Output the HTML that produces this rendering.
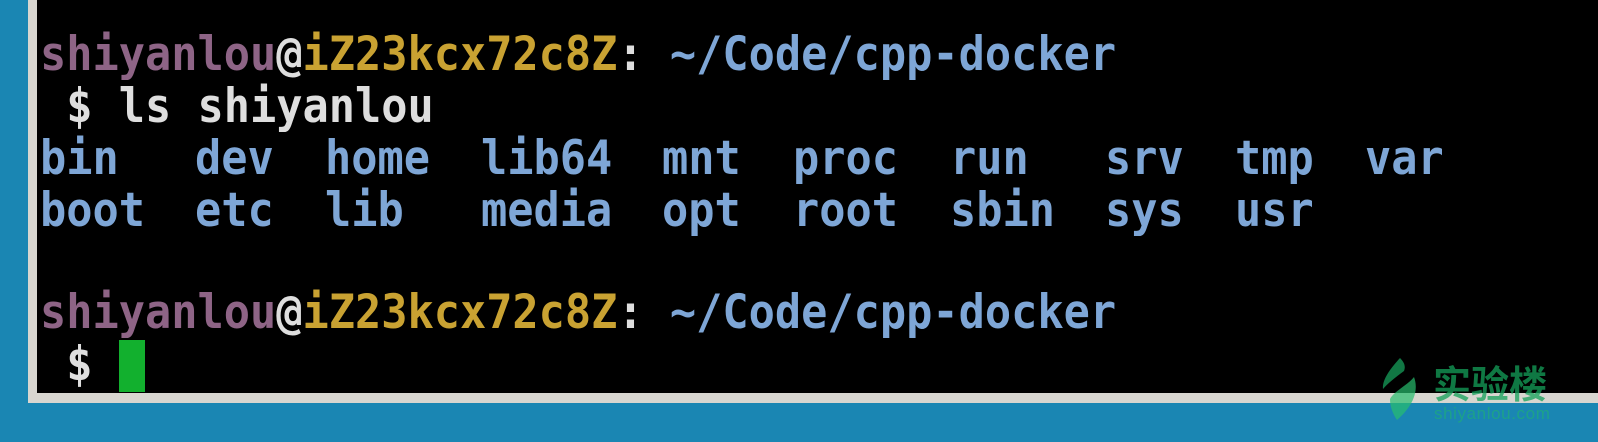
<!DOCTYPE html>
<html><head><meta charset="utf-8"><style>
html,body{margin:0;padding:0;width:1598px;height:442px;overflow:hidden;background:#1a86b3;}
.frame{position:absolute;left:28px;top:-10px;width:1600px;height:413px;background:#d8d6d0;}
.term{position:absolute;left:37px;top:0;width:1561px;height:393px;background:#000;}
.t{position:absolute;left:40px;font-family:"DejaVu Sans Mono","Liberation Mono",monospace;font-size:43.6px;font-weight:bold;white-space:pre;line-height:52px;transform:scaleY(1.08);transform-origin:0 0;}
.u{color:#8e6486}.h{color:#c9a232}.p{color:#7ea6d6}.w{color:#dedede}.b{color:#7ea6d6}
.cur{position:absolute;left:119px;top:340px;width:26px;height:52px;background:#12b02e;}
.logo{position:absolute;left:1433px;top:358px;font-family:"Noto Sans CJK SC",sans-serif;font-weight:bold;font-size:38px;color:rgba(20,160,90,0.75);line-height:48px;}
.dom{position:absolute;left:1434px;top:404px;font-family:"Liberation Sans",sans-serif;font-size:17px;color:rgba(30,180,110,0.6);letter-spacing:0.6px;}
</style></head><body>
<div class="frame"></div>
<div class="term"></div>
<div class="t" style="top:27px"><span class="u">shiyanlou</span><span class="w">@</span><span class="h">iZ23kcx72c8Z</span><span class="w">:</span><span class="p"> ~/Code/cpp-docker</span></div>
<div class="t w" style="top:79px"> $ ls shiyanlou</div>
<div class="t b" style="top:131px;left:40px">bin</div>
<div class="t b" style="top:131px;left:195px">dev</div>
<div class="t b" style="top:131px;left:325px">home</div>
<div class="t b" style="top:131px;left:481px">lib64</div>
<div class="t b" style="top:131px;left:662px">mnt</div>
<div class="t b" style="top:131px;left:793px">proc</div>
<div class="t b" style="top:131px;left:950px">run</div>
<div class="t b" style="top:131px;left:1105px">srv</div>
<div class="t b" style="top:131px;left:1235px">tmp</div>
<div class="t b" style="top:131px;left:1365px">var</div>
<div class="t b" style="top:183px;left:40px">boot</div>
<div class="t b" style="top:183px;left:195px">etc</div>
<div class="t b" style="top:183px;left:325px">lib</div>
<div class="t b" style="top:183px;left:481px">media</div>
<div class="t b" style="top:183px;left:662px">opt</div>
<div class="t b" style="top:183px;left:793px">root</div>
<div class="t b" style="top:183px;left:950px">sbin</div>
<div class="t b" style="top:183px;left:1105px">sys</div>
<div class="t b" style="top:183px;left:1235px">usr</div>
<div class="t" style="top:285px"><span class="u">shiyanlou</span><span class="w">@</span><span class="h">iZ23kcx72c8Z</span><span class="w">:</span><span class="p"> ~/Code/cpp-docker</span></div>
<div class="t w" style="top:337px"> $</div>
<div class="cur"></div>
<svg style="position:absolute;left:1380px;top:357px" width="42" height="64" viewBox="0 0 42 64">
<path d="M20 1 C8 14 2 24 3 32 C8 26 16 20 24 14 C26 9 24 5 20 1Z" fill="rgba(20,140,80,0.85)"/>
<path d="M34 20 C28 28 14 34 10 42 C10 50 13 57 17 63 C30 52 40 36 34 20Z" fill="rgba(40,190,110,0.7)"/>
</svg>
<div class="logo">实验楼</div>
<div class="dom">shiyanlou.com</div>
</body></html>
